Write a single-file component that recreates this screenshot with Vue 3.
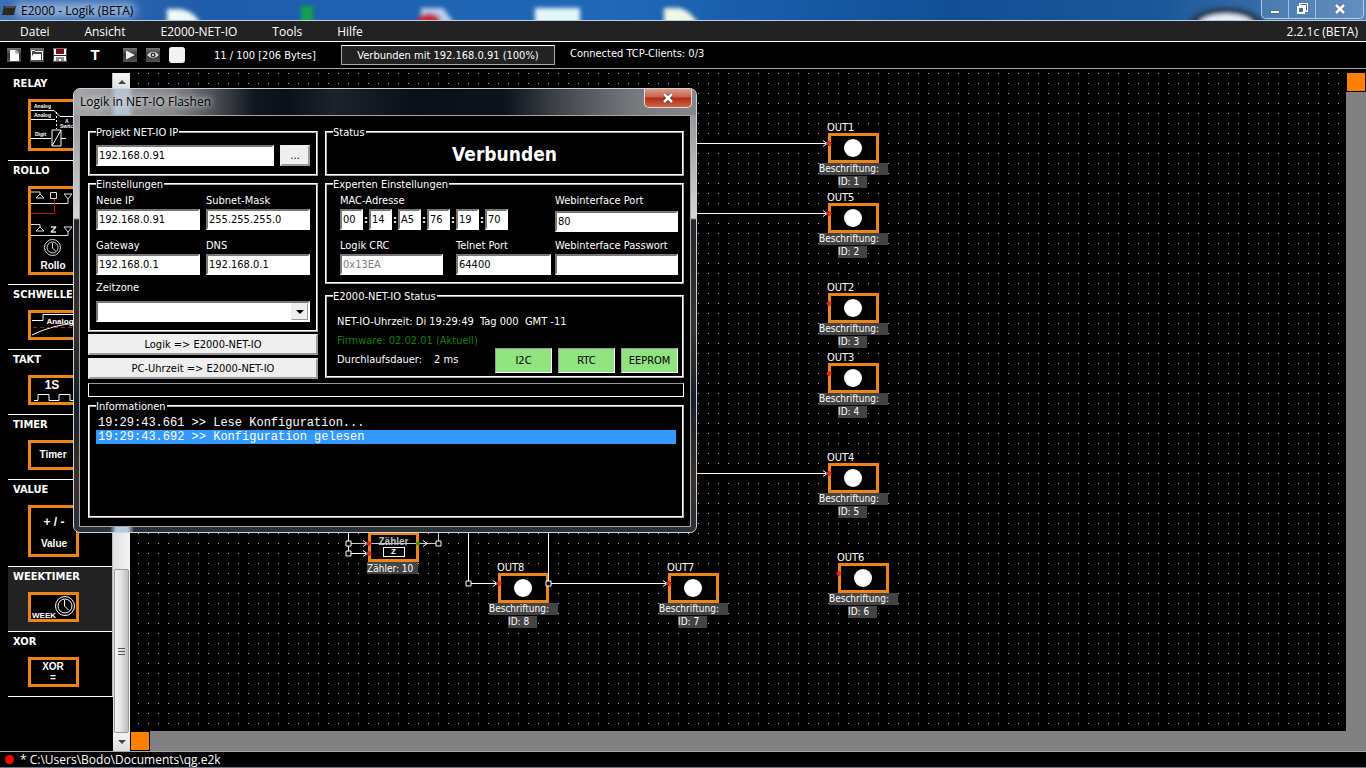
<template>
    <div class="app">
        <header class="titlebar">
            <svg class="aero" aria-hidden="true">
                <defs>
                    <linearGradient id="sky" x1="0" x2="1">
                        <stop offset="0" stop-color="#3d6fb4" />
                        <stop offset="0.15" stop-color="#1f5cab" />
                        <stop offset="0.45" stop-color="#2068b8" />
                        <stop offset="0.7" stop-color="#114e95" />
                        <stop offset="0.85" stop-color="#1b5799" />
                        <stop offset="1" stop-color="#5384b8" />
                    </linearGradient>
                    <filter id="soft" x="-50%" y="-50%" width="200%" height="200%"><feGaussianBlur stdDeviation="2" /></filter>
                    <filter id="glow" x="-50%" y="-100%" width="200%" height="300%"><feGaussianBlur stdDeviation="5" /></filter>
                </defs>
                <rect width="100%" height="21" fill="url(#sky)" />
                <rect x="14" y="3" width="122" height="14" rx="7" fill="#b4cbe6" opacity="0.75" filter="url(#glow)" />
                <g filter="url(#soft)">
                    <path d="M167 9h14q14 3 19 14h-33z" fill="#eefaf5" />
                    <rect x="301" y="6" width="12" height="18" fill="#19a04a" />
                    <path d="M421 8h22l12 16h-34z" fill="#b9cdec" />
                    <ellipse cx="429" cy="22" rx="12" ry="9" fill="#c32a3c" />
                    <rect x="535" y="8" width="45" height="18" fill="#e6f7fa" />
                    <path d="M664 8h16q12 4 18 16h-34z" fill="#eef8e8" />
                    <ellipse cx="1226" cy="25" rx="38" ry="18" fill="#25415f" />
                    <ellipse cx="1226" cy="24" rx="27" ry="10" fill="#e4f0fa" />
                </g>
            </svg>
            <svg class="logo" viewBox="0 0 14 12"><path d="M2 1h12l-2 9H0z" fill="#2b2724" /><path d="M3 2h10M1 10v2M4 10v2M7 10v2M10 10v2" stroke="#746a62" /></svg>
            <h1>E2000 - Logik (BETA)</h1>
            <div class="win-buttons">
                <button aria-label="Minimieren"><svg viewBox="0 0 12 12"><path d="M1.5 7.5h9v3h-9z" fill="#fff" stroke="#536b88" /></svg></button>
                <button aria-label="Verkleinern"><svg viewBox="0 0 12 12"><path d="M3 0h9v9H3z" fill="#fff" /><path d="M4.5 1.5h6v6" fill="none" stroke="#536b88" /><path d="M1 3h8v8H1z" fill="#fff" /><path d="M3.5 5.5h3v3h-3z" fill="#48698f" stroke="#48698f" /></svg></button>
                <button class="wide" aria-label="Beenden"><svg viewBox="0 0 12 12"><path d="M2 2l8 8M10 2l-8 8" stroke="#536b88" stroke-width="4" /><path d="M2 2l8 8M10 2l-8 8" stroke="#fff" stroke-width="2.5" /></svg></button>
            </div>
        </header>

        <nav class="menu">
            <a v-for="item in menu" :key="item" href="#">{{ item }}</a>
            <span class="version">2.2.1c (BETA)</span>
        </nav>

        <div class="toolbar">
            <button class="tool" aria-label="Neu"><svg viewBox="0 0 14 14"><path d="M3 2h6l3 3v8H3z" fill="#fff" /><path d="M9 2v3h3" fill="none" stroke="#777" /></svg></button>
            <button class="tool" aria-label="Öffnen"><svg viewBox="0 0 14 14"><path d="M1.5 12V2.5h3l1 1h7V12" fill="none" stroke="#fff" /><path d="M3 6h8v6H1z" fill="#fff" /></svg></button>
            <button class="tool" aria-label="Speichern"><svg viewBox="0 0 14 14"><path d="M1 1h12v12H1z" fill="#fff" /><path d="M3 1h8v5H3z" fill="#7e0d12" /><path d="M1 7.5h12M3 10h8M3 12h3M8 12h3" stroke="#222" /></svg></button>
            <button class="tool letter" aria-label="Text">T</button>
            <button class="tool" aria-label="Start"><svg viewBox="0 0 14 14"><path d="M3 2.5l9 4.5-9 4.5z" fill="#eee" /></svg></button>
            <button class="tool" aria-label="Anzeigen"><svg viewBox="0 0 14 14"><path d="M1 7q6-6.500 12 0-6 6.500-12 0z" fill="#ddd" /><circle cx="7" cy="7" r="2.5" fill="#333" /><circle cx="7" cy="7" r="1" fill="#fff" /></svg></button>
            <button class="tool blank" aria-label="Leer"></button>
            <span class="usage">11 / 100 [206 Bytes]</span>
            <button class="connection">Verbunden mit 192.168.0.91 (100%)</button>
            <span class="clients">Connected TCP-Clients: 0/3</span>
        </div>

        <main class="work">
            <aside class="palette">
                <section v-for="part in parts" :key="part.name" class="part" :class="{ active: part.active }">
                    <h2>{{ part.name }}</h2>
                    <svg class="symbol" width="51" :height="part.height" :viewBox="'0 0 51 ' + part.height">
                        <rect x="1.5" y="1.5" width="48" :height="part.height - 3" fill="#000" stroke="#ee8417" stroke-width="3" />
                        <g v-if="part.name === 'RELAY'" fill="none" stroke="#fff">
                            <path d="M3 11.5h23l6 6h16M3 20.5h24" />
                            <path d="M28.5 13v17" stroke-dasharray="2 2" />
                            <path d="M3 39.5h20M33 39.5h5M24 31h9v16h-9zM24 47l9-16" />
                            <g class="tiny">
                                <text x="6" y="9">Analog</text>
                                <text x="6" y="18">Analog</text>
                                <text x="7" y="37">Digit</text>
                                <text x="37" y="24">A</text>
                                <text x="32" y="29">Switch</text>
                            </g>
                        </g>
                        <g v-if="part.name === 'ROLLO'" fill="none" stroke="#ddd">
                            <path d="M3 6h9v3M8 12l4-4 4 4zM22.5 6.5h6v6h-6zM36 8h8l-4 5zM40 13v4.5H3" />
                            <path d="M26.5 13v14.5H3" stroke="#b01414" />
                            <path d="M3 38.5h9v3M8 45l4-4 4 4zM36 41h8l-4 5zM40 46v3.5H3" />
                            <path d="M23 41h5l-5 5h5" stroke-width="1.5" stroke-linejoin="bevel" />
                            <circle cx="24.5" cy="61.5" r="8" />
                            <circle cx="24.5" cy="61.5" r="5.5" />
                            <path d="M24.5 57v5l3 3" />
                            <text class="sym" x="25" y="83">Rollo</text>
                        </g>
                        <g v-if="part.name === 'SCHWELLE'" fill="none" stroke="#fff">
                            <path d="M4 10.5h11v-6h34M4 25q20-10 44-12" />
                            <path d="M5 17.5h44" stroke="#b01414" stroke-dasharray="4 3" />
                            <text class="sym small" x="32" y="14">Analog</text>
                        </g>
                        <g v-if="part.name === 'TAKT'" fill="none" stroke="#fff">
                            <text class="sym large" x="24" y="14">1S</text>
                            <path d="M6 25.5h4v-6h11v6h10v-6h11v6h5" />
                        </g>
                        <text v-if="part.name === 'TIMER'" class="sym" x="25" y="18">Timer</text>
                        <g v-if="part.name === 'VALUE'">
                            <text class="sym large" x="26" y="21">+ / -</text>
                            <text class="sym" x="26" y="42">Value</text>
                        </g>
                        <g v-if="part.name === 'WEEKTIMER'" fill="none" stroke="#fff">
                            <text class="sym small" x="16" y="26">WEEK</text>
                            <circle cx="37" cy="14" r="9.5" />
                            <circle cx="37" cy="14" r="7" />
                            <path d="M36.5 8v6l4 4" />
                        </g>
                        <g v-if="part.name === 'XOR'">
                            <text class="sym" x="25" y="13">XOR</text>
                            <text class="sym" x="25" y="24">=</text>
                        </g>
                    </svg>
                </section>
            </aside>

            <div class="scroller">
                <button class="arrow" aria-label="Nach oben"><svg viewBox="0 0 8 4"><path d="M0 4l4-4 4 4z" fill="#444" /></svg></button>
                <div class="track"><div class="thumb"><i></i><i></i><i></i></div></div>
                <button class="arrow" aria-label="Nach unten"><svg viewBox="0 0 8 4"><path d="M0 0l4 4 4-4z" fill="#444" /></svg></button>
            </div>

            <div class="board">
                <div class="canvas">
                    <svg class="grid-dots" aria-hidden="true">
                        <defs>
                            <pattern id="dots" width="10" height="10" patternUnits="userSpaceOnUse"><rect x="7" y="4" width="1" height="1" fill="#b4b4b4" /></pattern>
                        </defs>
                        <rect width="100%" height="100%" fill="url(#dots)" />
                    </svg>
                    <div v-for="node in nodes" :key="node.id" class="node" :style="{ left: node.x + 'px', top: node.y + 'px' }">
                        <span class="node-name">OUT{{ node.out }}</span>
                        <div class="node-box"><div class="lamp"></div></div>
                        <span class="tag">Beschriftung:</span>
                        <span class="tag id">ID: {{ node.id }}</span>
                    </div>
                    <div class="node counter">
                        <div class="node-box"><b>Zähler</b><span>Z</span></div>
                        <span class="tag">Zähler: 10</span>
                    </div>
                    <svg class="wires" aria-hidden="true">
                        <g fill="none" stroke="#fff">
                            <path d="M500 74.5h197M500 144.5h197M500 404.5h197" />
                            <path d="M337.5 400v114.5h30M417.5 400v114.5h120M217.5 400v84.5h20" />
                            <path d="M217.5 474.5h90V400" stroke="#ccc" />
                            <path v-for="head in heads" :key="head" :d="'M' + head + 'm-5-3 4 3-4 3'" />
                        </g>
                        <path v-for="joint in joints" :key="joint" :d="'M' + joint + 'm-2.5-2.5h5v5h-5z'" fill="#000" stroke="#fff" />
                        <path v-for="pin in pins" :key="pin" :d="'M' + pin + 'm0-3 3 3-3 3-3-3z'" fill="#e22a24" />
                        <circle cx="287" cy="474.5" r="2" fill="#16a516" />
                    </svg>
                </div>
                <div class="bar right"><button aria-label="Vertikal"></button></div>
                <div class="bar bottom"><button aria-label="Horizontal"></button></div>
            </div>
        </main>

        <footer class="status"><i></i>* C:\Users\Bodo\Documents\qg.e2k</footer>

        <div class="dialog" role="dialog" aria-labelledby="dialog-title">
            <div class="dialog-head">
                <h2 id="dialog-title">Logik in NET-IO Flashen</h2>
                <button class="close" aria-label="Schließen"><svg viewBox="0 0 12 10"><path d="M2 1l8 8M10 1l-8 8" stroke="#5c3434" stroke-width="4" /><path d="M2 1l8 8M10 1l-8 8" stroke="#fff" stroke-width="2.5" /></svg></button>
            </div>
            <form class="dialog-body" @submit.prevent>
                <div class="column">
                    <fieldset class="project">
                        <legend>Projekt NET-IO IP</legend>
                        <div class="row">
                            <input v-model="config.project" aria-label="Projekt NET-IO IP">
                            <button class="more">...</button>
                        </div>
                    </fieldset>
                    <fieldset class="settings">
                        <legend>Einstellungen</legend>
                        <div class="pairs">
                            <div class="field"><label for="ip">Neue IP</label><input id="ip" v-model="config.ip"></div>
                            <div class="field"><label for="mask">Subnet-Mask</label><input id="mask" v-model="config.mask"></div>
                            <div class="field"><label for="gateway">Gateway</label><input id="gateway" v-model="config.gateway"></div>
                            <div class="field"><label for="dns">DNS</label><input id="dns" v-model="config.dns"></div>
                        </div>
                        <div class="field zone">
                            <label for="zone">Zeitzone</label>
                            <div class="select">
                                <select id="zone"><option></option></select>
                                <span><svg viewBox="0 0 8 4"><path d="M0 0h8L4 4z" /></svg></span>
                            </div>
                        </div>
                    </fieldset>
                    <button class="action">Logik =&gt; E2000-NET-IO</button>
                    <button class="action">PC-Uhrzeit =&gt; E2000-NET-IO</button>
                </div>
                <div class="column">
                    <fieldset class="state">
                        <legend>Status</legend>
                        <strong>Verbunden</strong>
                    </fieldset>
                    <fieldset class="expert">
                        <legend>Experten Einstellungen</legend>
                        <div class="expert-grid">
                            <div class="field mac-field">
                                <label for="mac0">MAC-Adresse</label>
                                <div class="mac">
                                    <template v-for="(part, i) in mac" :key="i">
                                        <b v-if="i > 0">:</b>
                                        <input :id="'mac' + i" v-model="mac[i]" :aria-label="'MAC ' + (i + 1)">
                                    </template>
                                </div>
                            </div>
                            <div class="field web port"><label for="port">Webinterface Port</label><input id="port" v-model="config.port"></div>
                            <div class="field"><label for="crc">Logik CRC</label><input id="crc" value="0x13EA" disabled></div>
                            <div class="field"><label for="telnet">Telnet Port</label><input id="telnet" v-model="config.telnet"></div>
                            <div class="field web"><label for="password">Webinterface Passwort</label><input id="password"></div>
                        </div>
                    </fieldset>
                    <fieldset class="netio">
                        <legend>E2000-NET-IO Status</legend>
                        <div class="netio-body">
                            <p>NET-IO-Uhrzeit: Di 19:29:49&nbsp; Tag 000&nbsp; GMT -11</p>
                            <p class="firmware">Firmware: 02.02.01 (Aktuell)</p>
                            <div class="row">
                                <p class="cycle"><span>Durchlaufsdauer:</span><span>2 ms</span></p>
                                <button v-for="chip in ['I2C', 'RTC', 'EEPROM']" :key="chip" class="chip">{{ chip }}</button>
                            </div>
                        </div>
                    </fieldset>
                </div>
                <div class="progress" role="progressbar" aria-label="Fortschritt"></div>
                <fieldset class="log">
                    <legend>Informationen</legend>
                    <ul>
                        <li v-for="(line, i) in log" :key="i" :class="{ selected: i === selected }" @click="selected = i">{{ line }}</li>
                    </ul>
                </fieldset>
            </form>
        </div>
    </div>
</template>

<script setup>
import { ref } from 'vue';

const menu = ['Datei', 'Ansicht', 'E2000-NET-IO', 'Tools', 'Hilfe'];

const parts = [
    { name: 'RELAY', height: 52 },
    { name: 'ROLLO', height: 89 },
    { name: 'SCHWELLE', height: 30 },
    { name: 'TAKT', height: 30 },
    { name: 'TIMER', height: 30 },
    { name: 'VALUE', height: 52 },
    { name: 'WEEKTIMER', height: 30, active: true },
    { name: 'XOR', height: 30 }
];

// positions on the canvas, relative to its top left corner
const nodes = [
    { id: 1, out: 1, x: 688, y: 51 },
    { id: 2, out: 5, x: 688, y: 121 },
    { id: 3, out: 2, x: 688, y: 211 },
    { id: 4, out: 3, x: 688, y: 281 },
    { id: 5, out: 4, x: 688, y: 381 },
    { id: 6, out: 6, x: 698, y: 481 },
    { id: 7, out: 7, x: 528, y: 491 },
    { id: 8, out: 8, x: 358, y: 491 }
];

const heads = ['697 74.5', '697 144.5', '697 404.5', '367 514.5', '537 514.5', '237 474.5', '237 484.5', '297 474.5'];
const joints = ['217.5 474.5', '217.5 484.5', '307.5 474.5', '337.5 514.5', '417.5 514.5'];
const pins = [
    '698 74.5', '698 144.5', '698 234.5', '698 304.5', '698 404.5', '708 504.5',
    '368 514.5', '538 514.5', '238 474.5', '238 484.5'
];

const config = ref({
    project: '192.168.0.91',
    ip: '192.168.0.91',
    mask: '255.255.255.0',
    gateway: '192.168.0.1',
    dns: '192.168.0.1',
    port: '80',
    telnet: '64400'
});

const mac = ref(['00', '14', 'A5', '76', '19', '70']);

const log = [
    '19:29:43.661 >> Lese Konfiguration...',
    '19:29:43.692 >> Konfiguration gelesen'
];
const selected = ref(1);
</script>

<style>
body {
    margin: 0;
    background: #000;
}
</style>

<style scoped>
.app {
    position: relative;
    display: flex;
    flex-direction: column;
    height: 100vh;
    overflow: hidden;
    background: #000;
    color: #fff;
    font-family: Tahoma, "DejaVu Sans Condensed", "DejaVu Sans", sans-serif;
    font-size: 11px;
    line-height: 13px;
}

.app * {
    box-sizing: border-box;
}

h1,
h2,
p,
ul {
    margin: 0;
    padding: 0;
    font-weight: normal;
}

button,
input,
select {
    margin: 0;
    padding: 0;
    border-radius: 0;
    font: inherit;
}

/* window frame */
.titlebar {
    position: relative;
    flex: 0 0 21px;
    display: flex;
    min-height: 0;
    border-bottom: 1px solid #b7cde6;
    overflow: hidden;
}

.aero {
    position: absolute;
    width: 100%;
    height: 21px;
}

.logo {
    position: relative;
    width: 14px;
    height: 12px;
    margin: 5px 5px 0 2px;
}

.titlebar h1 {
    position: relative;
    flex: 1;
    color: #000;
    font: 12px/22px "Open Sans", sans-serif;
}

.win-buttons {
    position: relative;
    display: flex;
    height: 19px;
    margin-right: 2px;
    border: 1px solid #b6cbe4;
    border-top: 0;
    border-radius: 0 0 5px 5px;
}

.win-buttons button {
    width: 27px;
    border: 0;
    border-right: 1px solid #a6bedb;
    background: #ffffff18;
    line-height: 0;
}

.win-buttons .wide {
    width: 47px;
    border-right: 0;
}

.win-buttons svg {
    width: 12px;
    height: 12px;
}

.menu {
    flex: 0 0 21px;
    display: flex;
    gap: 35px;
    min-height: 0;
    padding: 0 8px 0 20px;
    border-bottom: 1px solid #fff;
    background: #222;
    font: 12px/22px "Open Sans", sans-serif;
}

.menu a {
    color: #fff;
    text-decoration: none;
}

.version {
    margin-left: auto;
}

.toolbar {
    flex: 0 0 27px;
    display: flex;
    align-items: center;
    padding-left: 7px;
    border-bottom: 1px solid #aaa;
}

.tool {
    width: 14px;
    height: 14px;
    margin-right: 9px;
    border: 0;
    background: linear-gradient(#777, #333 50%, #555);
    line-height: 0;
}

.tool svg {
    width: 14px;
    height: 14px;
}

.tool.letter {
    margin: 0 21px 0 12px;
    background: none;
    color: #fff;
    font: bold 15px/14px "Liberation Sans", sans-serif;
}

.tool.blank {
    width: 16px;
    height: 16px;
    margin: 0 29px 0 0;
    border-radius: 3px;
    background: #f2f2f2;
}

.usage {
    width: 127px;
}

.connection {
    width: 214px;
    height: 20px;
    border: 1px solid #aaa;
    border-top-color: #fff;
    background: #222;
    color: #fff;
}

.clients {
    margin: 0 0 4px 15px;
}

.work {
    flex: 1;
    display: flex;
    min-height: 0;
}

/* component palette */
.palette {
    flex: 0 0 105px;
    align-self: flex-start;
    margin: 4px 0 0 8px;
    border-right: 1px solid #bbb;
    border-bottom: 1px solid #fff;
}

.part {
    padding: 0 0 9px 20px;
    border-top: 1px solid #fff;
    line-height: 0;
}

.part:first-child {
    border-top-color: #000;
}

.part.active {
    background: #222;
}

.part h2 {
    margin: 3px 0 9px -15px;
    font-size: 11px;
    font-weight: bold;
    line-height: 13px;
}

.symbol text {
    fill: #fff;
    stroke: none;
    font-family: "Liberation Sans", sans-serif;
    font-weight: bold;
}

.sym {
    font-size: 10px;
    text-anchor: middle;
}

.sym.small {
    font-size: 8px;
}

.sym.large {
    font-size: 12px;
}

.tiny {
    font-size: 5px;
}

.scroller {
    flex: 0 0 17px;
    display: flex;
    flex-direction: column;
    margin-top: 4px;
    background: linear-gradient(90deg, #ddd, #f4f4f4);
}

.arrow {
    height: 18px;
    border: 0;
    background: linear-gradient(#f4f4f4, #ddd);
    line-height: 0;
}

.arrow svg {
    width: 8px;
    height: 4px;
}

.track {
    flex: 1;
    display: flex;
    flex-direction: column;
    justify-content: flex-end;
    padding: 0 1px;
}

.thumb {
    display: flex;
    flex-direction: column;
    align-items: center;
    justify-content: center;
    gap: 2px;
    height: 25%;
    min-height: 164px;
    border: 1px solid #999;
    border-radius: 2px;
    background: linear-gradient(90deg, #f4f4f4, #e4e4e6 45%, #bbbbc0);
}

.thumb i {
    width: 7px;
    height: 1px;
    background: #555;
}

/* logic board */
.board {
    flex: 1;
    display: grid;
    grid-template-columns: 1fr 20px;
    grid-template-rows: 1fr 20px;
    padding-left: 1px;
    min-width: 0;
}

.canvas {
    position: relative;
    overflow: hidden;
}

.grid-dots,
.wires {
    position: absolute;
    top: 0;
    left: 0;
    width: 100%;
    height: 100%;
}

.bar {
    background: #808080;
}

.bar button {
    display: block;
    width: 20px;
    height: 20px;
    border: 1px solid #000;
    background: #ff8000;
}

.bar.right {
    padding-top: 3px;
    background: linear-gradient(#000 3px, #808080 3px);
}

.bar.bottom {
    grid-column: 1 / 3;
    margin-left: -1px;
}

.node {
    position: absolute;
    display: flex;
    flex-direction: column;
    align-items: flex-start;
    width: 69px;
}

.node-name {
    height: 13px;
    margin-left: 8px;
    line-height: 15px;
}

.node-box {
    display: flex;
    align-items: center;
    width: 51px;
    height: 30px;
    margin-left: 9px;
    padding-left: 13px;
    border: 3px solid #ee8417;
    background: #000;
}

.lamp {
    width: 18px;
    height: 18px;
    border-radius: 50%;
    background: #fff;
}

.tag {
    width: 69px;
    height: 12px;
    background: #444;
    font-size: 10px;
    line-height: 12px;
    white-space: nowrap;
}

.tag.id {
    width: 29px;
    margin: 1px 0 0 19px;
}

.counter {
    left: 228px;
    top: 463px;
}

.counter .node-box {
    flex-direction: column;
    justify-content: flex-end;
    padding: 0;
    font: bold 10px/10px "Liberation Sans", sans-serif;
    color: #bbb;
}

.counter .node-box span {
    width: 22px;
    height: 10px;
    margin-bottom: 2px;
    border: 1px solid #fff;
    color: #fff;
    font-size: 8px;
    line-height: 8px;
    text-align: center;
}

.counter .tag {
    width: 51px;
    margin-left: 8px;
    line-height: 13px;
}

.status {
    flex: 0 0 17px;
    display: flex;
    align-items: center;
    gap: 6px;
    padding-left: 5px;
    border-top: 1px solid #aaa;
    border-bottom: 1px solid #64788c;
    font: 12px/15px "Open Sans", sans-serif;
}

.status i {
    width: 9px;
    height: 9px;
    border-radius: 50%;
    background: #f00;
}

/* flash dialog */
.dialog {
    position: absolute;
    left: 73px;
    top: 88px;
    width: 624px;
    padding: 0 5px 5px;
    border: 1px solid #d0d3d6;
    border-radius: 7px;
    background:
        linear-gradient(90deg, transparent 36px, #b4cbe4 42px, #b4cbe4 54px, transparent 60px) bottom / 100% 6px no-repeat,
        linear-gradient(#85898f, #d5d5d5 129px, #22262c 131px, #39332e 240px, #14202c 310px, #3a3029 390px, #29323a);
}

.dialog-head {
    display: flex;
    justify-content: space-between;
    height: 26px;
    margin: 0 -5px;
    padding: 0 4px 0 6px;
    border-radius: 6px 6px 0 0;
    background:
        linear-gradient(90deg, transparent 36px, #c8dcf0a0 42px, #c8dcf0a0 54px, transparent 60px),
        linear-gradient(90deg, #a3a5a8, #85878a 100px, #4c4f54 140px, #11161f 180px, #0a0f18 210px, #1c212a 260px, #0a0f18 340px, #0d121b 430px, #45494f 490px, #777a7d 560px, #85888b);
}

.dialog-head h2 {
    color: #000;
    font: 12px/26px "Open Sans", sans-serif;
    text-shadow: 0 0 6px #ddd, 0 0 6px #ddd;
}

.close {
    width: 48px;
    height: 19px;
    border: 1px solid #eed8d4;
    border-top: 0;
    border-radius: 0 0 5px 5px;
    background: linear-gradient(#dc9a8c, #c9604c 45%, #ae2c14 50%, #d06444);
    line-height: 0;
}

.close svg {
    width: 12px;
    height: 10px;
}

.dialog-body {
    display: grid;
    grid-template-columns: 230px 1fr;
    gap: 4px 7px;
    height: 412px;
    padding: 10px 6px 8px 8px;
    border: 1px solid #a6a6a6;
    background: #000;
    align-content: start;
}

.column {
    display: flex;
    flex-direction: column;
}

fieldset {
    min-width: 0;
    margin: 0 0 2px;
    padding: 0 6px;
    border: 2px ridge #fff;
}

legend {
    height: 12px;
    padding: 0 1px 0 0;
    line-height: 13px;
}

input,
select {
    width: 100%;
    height: 21px;
    padding-left: 1px;
    border: 2px solid #fff;
    border-top-color: #777;
    border-left-color: #777;
    background: #fff;
    color: #000;
}

input:disabled {
    color: #808080;
}

.row {
    display: flex;
    gap: 6px;
}

.field {
    min-width: 0;
}

.field label {
    display: block;
    height: 15px;
    line-height: 13px;
    white-space: nowrap;
}

.project {
    height: 50px;
    padding-top: 7px;
}

.more {
    flex: 0 0 30px;
    border: 2px outset #eee;
    background: #efefef;
    color: #000;
}

.settings {
    height: 154px;
    padding-top: 4px;
}

.pairs {
    display: grid;
    grid-template-columns: 104px 104px;
    gap: 9px 6px;
}

.zone {
    width: 214px;
    margin-top: 6px;
}

.zone label {
    height: 20px;
    line-height: 14px;
}

.select {
    position: relative;
}

.select select {
    appearance: none;
}

.select span {
    position: absolute;
    top: 2px;
    right: 2px;
    display: flex;
    align-items: center;
    justify-content: center;
    width: 17px;
    height: 17px;
    border: 1px outset #eee;
    background: #eee;
    pointer-events: none;
}

.select svg {
    width: 8px;
    height: 4px;
}

.action {
    height: 21px;
    border: 2px outset #eee;
    background: #efefef;
    color: #000;
}

.action + .action {
    margin-top: 3px;
}

.state {
    height: 50px;
}

.state strong {
    display: block;
    font-size: 19px;
    line-height: 33px;
    text-align: center;
}

.expert {
    height: 106px;
    padding: 4px 4px 0 13px;
}

/* the legend stays in line with the other boxes */
.expert legend {
    margin-left: -7px;
}

.expert-grid {
    display: grid;
    grid-template-columns: 103px 95px 1fr;
    gap: 9px 13px;
}

.mac-field {
    grid-column: 1 / 3;
}

.web {
    margin-left: -9px;
}

.port label {
    height: 17px;
}

.port {
    height: 36px;
}

.mac {
    display: flex;
    align-items: center;
}

.mac input {
    width: 23px;
}

.mac b {
    width: 6px;
    text-align: center;
}

.netio {
    height: 88px;
    margin: 4px 0 0;
    padding: 0 4px 0 10px;
}

.netio legend {
    margin-left: -4px;
}

.netio-body {
    padding-top: 10px;
}

.netio-body p {
    height: 19px;
    line-height: 19px;
    white-space: nowrap;
}

.netio-body .row {
    margin-top: -2px;
}

.netio-body .firmware {
    color: #0a800a;
}

.netio-body .cycle {
    flex: 1;
    display: flex;
    gap: 12px;
    padding-top: 2px;
}

.chip {
    width: 57px;
    height: 25px;
    border: 1px solid #fff;
    border-top-color: #999;
    border-left-color: #999;
    background: #90e37f;
    color: #000;
}

.progress {
    grid-column: 1 / 3;
    height: 14px;
    border: 1px solid #fff;
    border-top-color: #999;
}

.log {
    grid-column: 1 / 3;
    height: 118px;
    margin-top: -1px;
    padding-top: 4px;
}

.log ul {
    list-style: none;
    font: 12px/14px "Courier New", "Liberation Mono", monospace;
}

.log li {
    padding-left: 2px;
}

.log .selected {
    background: #3399ff;
}
</style>
